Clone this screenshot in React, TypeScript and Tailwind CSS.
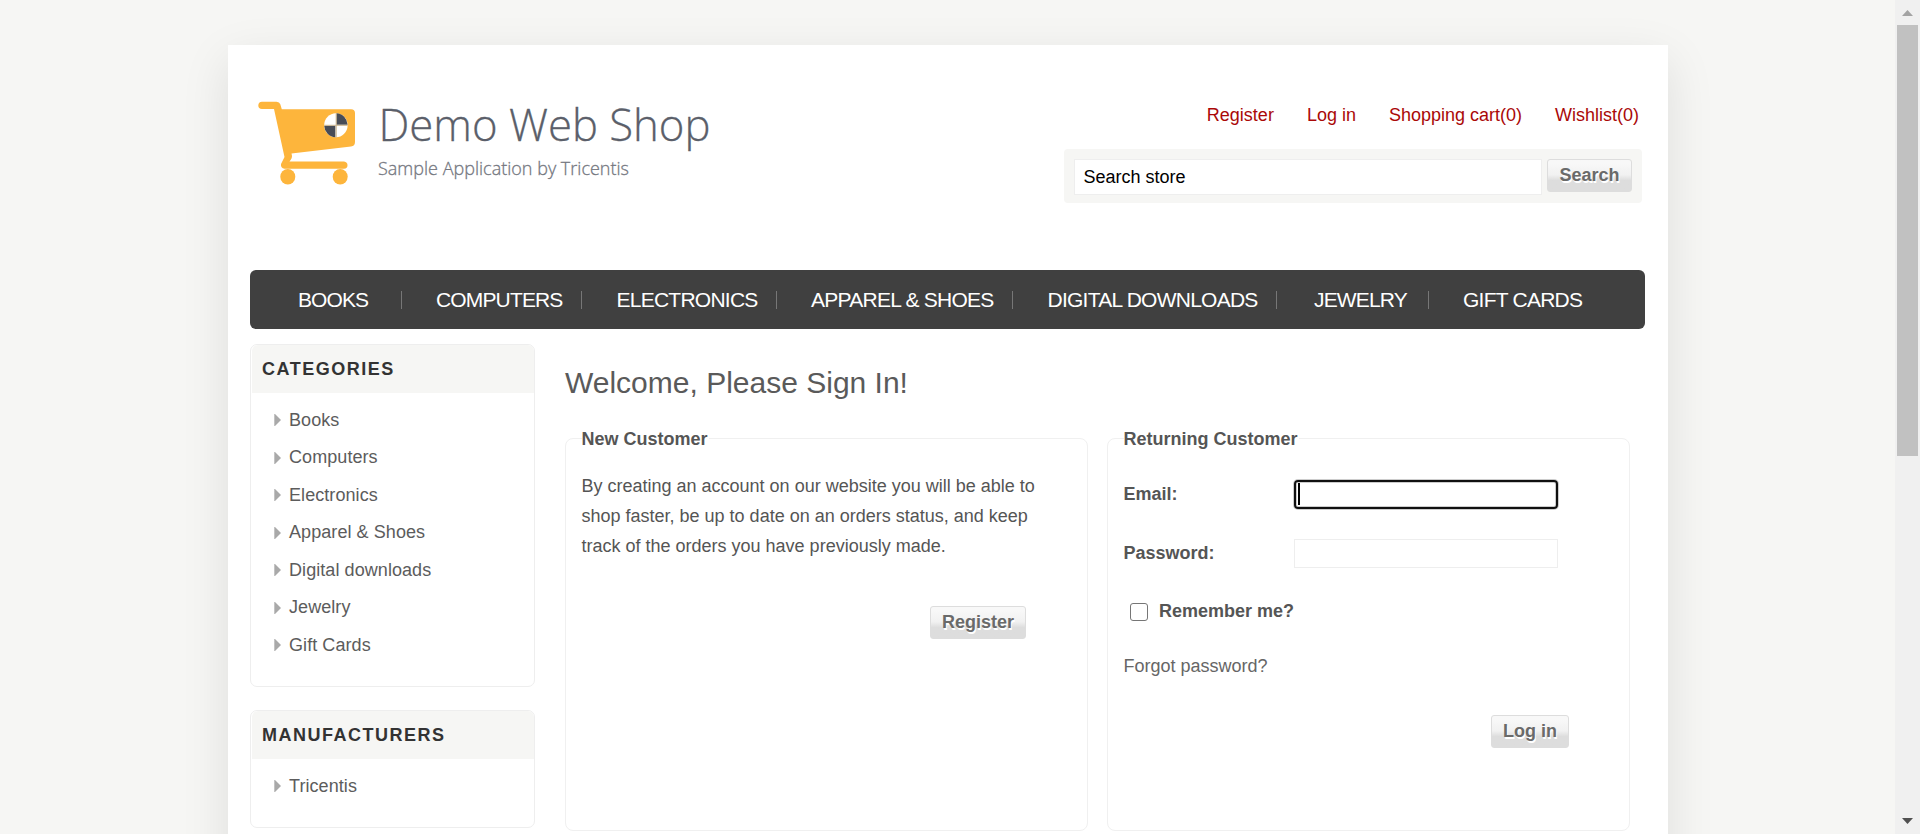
import React from "react";

const NAV = [
  { label: "BOOKS", cls: "w-[152px] pl-[48px] tracking-[-0.9px]" },
  { label: "COMPUTERS", cls: "w-[180px] pl-[34px] tracking-[-0.85px]" },
  { label: "ELECTRONICS", cls: "w-[194.500px] pl-[34.500px]" },
  { label: "APPAREL & SHOES", cls: "w-[236px] pl-[34.500px]" },
  { label: "DIGITAL DOWNLOADS", cls: "w-[264.500px] pl-[35px]" },
  { label: "JEWELRY", cls: "w-[152px] pl-[37px] tracking-[-0.85px]" },
  { label: "GIFT CARDS", cls: "flex-1 pl-[34px]" },
];

const CATEGORIES = ["Books", "Computers", "Electronics", "Apparel & Shoes", "Digital downloads", "Jewelry", "Gift Cards"];

function Logo() {
  return (
    <svg width="472" height="98" viewBox="250 92 472 98" className="block">
      <g fill="#fdb53c">
        <path d="M262 101.700H276.500Q279.500 101.700 280.300 104.200L281.800 109.200H351Q355 109.200 355 113V142Q355 146 351 146.500L291.500 153.600Q293 158 289.500 161.500H344Q347.500 162 347.500 165.200Q347.500 168.600 344 168.800H284.500Q280.500 168.300 281 164L284.500 157L274 109H262Q258.300 108.600 258.300 105.400Q258.300 102 262 101.700Z" />
        <ellipse cx="287.800" cy="176.700" rx="7.500" ry="7.700" />
        <ellipse cx="340.200" cy="176.700" rx="7.500" ry="7.700" />
      </g>
      <ellipse cx="335.900" cy="125.300" rx="11.700" ry="12" fill="#fff" />
      <path d="M336.400 124.800V113.300A11.700 12 0 0 1 347.600 124.800ZM335.400 125.800V137.300A11.700 12 0 0 1 324.200 125.800Z" fill="#484c57" />
      <path d="M336.200 113.300V137.300M324.200 125.300H347.600" stroke="#c9b28c" strokeWidth="1" />
      <g fontFamily="'Open Sans', sans-serif" fontWeight="300">
        <text x="378.500" y="141.200" fontSize="45" textLength="332" lengthAdjust="spacingAndGlyphs" fill="#5b5f6a" stroke="#5b5f6a" strokeWidth="0.3">
          Demo Web Shop
        </text>
        <text x="378" y="174.800" fontSize="18.500" textLength="251" lengthAdjust="spacingAndGlyphs" fill="#747780" stroke="#747780" strokeWidth="0.3">
          Sample Application by Tricentis
        </text>
      </g>
    </svg>
  );
}

function GreyButton({ children, className }: { children: React.ReactNode; className: string }) {
  return (
    <button
      className={
        "h-[33px] shrink-0 rounded-[3px] border border-[#dddddd] bg-linear-to-b from-[#f8f8f8] from-[12%] via-[#f1f1f1] via-[48%] to-[#dddddd] to-[66%] pb-px text-[18px] leading-[30px] font-bold text-[#6a6a6a] [text-shadow:1px_2px_0_#fff] " +
        className
      }
    >
      {children}
    </button>
  );
}

function SideBlock({ title, items, className }: { title: string; items: string[]; className: string }) {
  return (
    <section className={"rounded-[7px] border border-[#eeeeee] " + className}>
      <h3 className="ml-px h-[48px] rounded-t-[6px] bg-[#f6f6f4] pl-[10px] text-[18px] leading-[48px] font-bold tracking-[1.5px] text-[#333333]">
        {title}
      </h3>
      <ul className="pt-[8px] pl-[23px]">
        {items.map((t) => (
          <li key={t} className="flex h-[37.5px] items-center gap-[8px] text-[18px] leading-[36px] tracking-[0.07px] text-[#5c5c5c]">
            <svg width="7" height="14" viewBox="0 0 7 14" className="mt-px">
              <path d="M0.300 1H1L6.500 6.500V7.500L1 13H0.300Z" fill="#a9a9a9" />
            </svg>
            <a>{t}</a>
          </li>
        ))}
      </ul>
    </section>
  );
}

export default function App() {
  return (
    <div className="flex h-[834px] w-[1920px] overflow-hidden bg-[#f6f6f4] text-[18px] text-[#555555] [font-family:'Liberation_Sans',Arial,sans-serif]">
      <div className="h-full w-[1895px] overflow-hidden pt-[45px] pl-[228px]">
        <main className="h-[1300px] w-[1440px] bg-white pr-[23px] pl-[22px] shadow-[0_15px_45px_rgba(0,0,0,0.1)]">
          <header className="flex h-[225px] justify-between">
            <div className="pt-[47px]">
              <Logo />
            </div>
            <div className="flex w-[581px] flex-col">
              <nav className="flex h-[104px] justify-end gap-[33px] pt-[55px] pr-[6px] leading-[30px] text-[#aa0808]">
                <a>Register</a>
                <a>Log in</a>
                <a>Shopping cart(0)</a>
                <a>Wishlist(0)</a>
              </nav>
              <div className="flex h-[54px] w-[578px] gap-[5px] rounded-[4px] bg-[#f6f6f4] p-[10px]">
                <div className="h-[36px] w-[468px] border border-[#eeeeee] bg-white pl-[8.5px] leading-[34px] text-black">Search store</div>
                <GreyButton className="w-[85px]">Search</GreyButton>
              </div>
            </div>
          </header>

          <nav className="flex h-[59px] items-center rounded-[6px] bg-[#404040] text-[21px] tracking-[-0.75px] text-white">
            {NAV.map((n) => (
              <a key={n.label} className={"h-[18px] border-r border-[#777777] leading-[18px] whitespace-nowrap last:border-r-0 " + n.cls}>
                {n.label}
              </a>
            ))}
          </nav>

          <div className="flex pt-[15px]">
            <aside className="w-[285px]">
              <SideBlock title="CATEGORIES" items={CATEGORIES} className="h-[343px]" />
              <SideBlock title="MANUFACTURERS" items={["Tricentis"]} className="mt-[23px] h-[118px]" />
            </aside>
            <div className="ml-[30px] w-[1065px] pt-[15px]">
              <h1 className="h-[79px] text-[30px] leading-[48px] text-[#5a5a5a]">Welcome, Please Sign In!</h1>
              <div className="flex gap-[19px]">
                <section className="h-[393px] w-[523px] rounded-[8px] border border-[#f0f0f0] pl-[15.5px]">
                  <h2 className="-mt-[14px] w-fit bg-white pr-px leading-[28px] font-bold">New Customer</h2>
                  <p className="mt-[18px] w-[470px] leading-[30px]">
                    By creating an account on our website you will be able to shop faster, be up to date on an orders status, and keep track of the orders you have previously made.
                  </p>
                  <div className="mt-[45px] flex justify-end pr-[61px]">
                    <GreyButton className="w-[96px]">Register</GreyButton>
                  </div>
                </section>
                <section className="h-[393px] w-[523px] rounded-[8px] border border-[#f0f0f0] pl-[15.5px]">
                  <h2 className="-mt-[14px] w-fit bg-white pr-px leading-[28px] font-bold">Returning Customer</h2>
                  <div className="mt-[26px] flex h-[30px] items-center">
                    <label className="w-[170.500px] font-bold">Email:</label>
                    <div className="flex h-[29px] w-[264px] items-center rounded-[4px] border-2 border-[#101010] pl-[2px] shadow-[0_0_0_1px_#ccc,inset_0_0_0_1px_#ccc]">
                      <span className="h-[22px] w-[2px] bg-black" />
                    </div>
                  </div>
                  <div className="mt-[29px] flex h-[30px] items-center">
                    <label className="w-[170.500px] font-bold">Password:</label>
                    <div className="h-[29px] w-[264px] border border-[#eeeeee]" />
                  </div>
                  <div className="mt-[28px] flex h-[30px] items-center pl-[6.500px]">
                    <span className="mt-[2px] h-[18px] w-[18px] rounded-[3px] border-[1.5px] border-[#767676] bg-white" />
                    <label className="ml-[11px] font-bold">Remember me?</label>
                  </div>
                  <a className="mt-[25px] block leading-[30px] text-[#666666]">Forgot password?</a>
                  <div className="mt-[34px] flex justify-end pr-[60px]">
                    <GreyButton className="w-[78px]">Log in</GreyButton>
                  </div>
                </section>
              </div>
            </div>
          </div>
        </main>
      </div>

      <div className="flex h-full w-[25px] flex-col items-center bg-[#f0f0f0]">
        <svg width="11" height="25" viewBox="0 0 11 25" className="shrink-0">
          <path d="M5.500 10L11 16H0Z" fill="#a3a3a3" />
        </svg>
        <div className="h-[431px] w-[21px] bg-[#c1c1c1]" />
        <svg width="11" height="16" viewBox="0 0 11 16" className="mt-auto">
          <path d="M0 0H11L5.500 6Z" fill="#505050" />
        </svg>
      </div>
    </div>
  );
}
